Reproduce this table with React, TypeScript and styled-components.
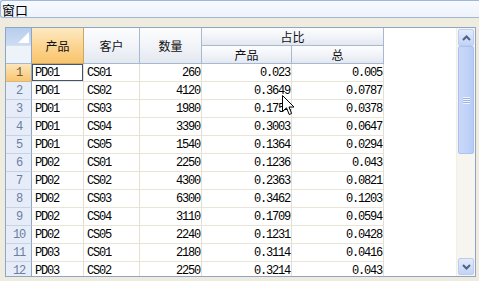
import React from "react";
import styled, { createGlobalStyle, css } from "styled-components";

const Global = createGlobalStyle`
  html, body { margin: 0; padding: 0; }
  body {
    width: 479px;
    height: 281px;
    overflow: hidden;
    background: #efebdf;
    font-family: "Noto Sans CJK SC", "Liberation Sans", sans-serif;
  }
`;

const Page = styled.div`
  position: relative;
  display: flex;
  flex-direction: column;
  width: 479px;
  height: 281px;
`;

const TitleBar = styled.div`
  box-sizing: border-box;
  height: 18px;
  display: flex;
  align-items: center;
  padding-left: 1px;
  background: linear-gradient(#f6f9fe, #eef3fb);
  border: 1px solid #9fb8d9;
  border-radius: 3px 0 0 3px;
  border-right: none;
  font-size: 13px;
  color: #000;
  line-height: 1;
`;

const Content = styled.div`
  flex: 1;
  padding: 9px 3px 4px 5px;
  display: flex;
`;

const Frame = styled.div`
  box-sizing: border-box;
  flex: 1;
  height: 250px;
  display: flex;
  border: 1px solid #8ea6c4;
  background: #ffffff;
  overflow: hidden;
`;

const Table = styled.div`
  display: grid;
  grid-template-columns: 26px 52px 56px 62px 90px 92px;
  grid-template-rows: 18px 18px;
  grid-auto-rows: 18px;
  align-self: flex-start;
`;

const headerBase = css`
  box-sizing: border-box;
  display: flex;
  align-items: center;
  justify-content: center;
  border-right: 1px solid #a7b9d1;
  border-bottom: 1px solid #a7b9d1;
  background: linear-gradient(#fdfdfe 0%, #f3f5f9 45%, #e3e8f0 100%);
  font-size: 12px;
  color: #111;
  line-height: 1;
`;

const HeaderCell = styled.div<{ $active?: boolean; $rows?: number; $cols?: number }>`
  ${headerBase};
  grid-row: span ${(p) => p.$rows ?? 1};
  grid-column: span ${(p) => p.$cols ?? 1};
  ${(p) =>
    p.$active &&
    css`
      background: linear-gradient(#fde9c3 0%, #fcd592 50%, #f9c46c 100%);
      border-right-color: #c9a66a;
      border-bottom-color: #c9a66a;
    `}
`;

const Corner = styled.div`
  box-sizing: border-box;
  grid-row: span 2;
  display: flex;
  flex-direction: column;
  border-right: 1px solid #8ea6c4;
  border-bottom: 1px solid #a7b9d1;
  background: #eef2f9;
`;

const CornerTop = styled.div`
  position: relative;
  height: 17px;
  background: linear-gradient(#b7cdee, #cddcf3);
  border-bottom: 1px solid #d4dff0;
  &::after {
    content: "";
    position: absolute;
    right: 2px;
    bottom: 2px;
    width: 0;
    height: 0;
    border-left: 11px solid transparent;
    border-bottom: 11px solid #ffffff;
  }
`;

const RowHead = styled.div<{ $active?: boolean }>`
  box-sizing: border-box;
  display: flex;
  align-items: center;
  justify-content: center;
  border-right: 1px solid #8ea6c4;
  border-bottom: 1px solid #c5d3e6;
  background: #e6edf8;
  color: #6a7ea2;
  font-family: "Liberation Mono", monospace;
  font-size: 12px;
  letter-spacing: -1.2px;
  padding-left: 1px;
  ${(p) =>
    p.$active &&
    css`
      background: linear-gradient(#fde6bb, #f9c670);
      color: #6b5a3a;
      border-bottom-color: #d8b77a;
    `}
`;

const Cell = styled.div<{ $num?: boolean; $active?: boolean }>`
  box-sizing: border-box;
  display: flex;
  align-items: center;
  justify-content: ${(p) => (p.$num ? "flex-end" : "flex-start")};
  padding: ${(p) => (p.$num ? "0 1px 0 0" : "0 0 0 3px")};
  border-right: 1px solid #e4dfcf;
  border-bottom: 1px solid #e8e4d6;
  font-family: "Liberation Mono", monospace;
  font-size: 12px;
  letter-spacing: -1.2px;
  color: #000;
  white-space: nowrap;
  ${(p) =>
    p.$active &&
    css`
      box-shadow: inset 0 0 0 1px #3f5478;
    `}
`;

const Filler = styled.div`
  flex: 1;
  background: #ffffff;
`;

const ScrollBar = styled.div`
  box-sizing: border-box;
  width: 19px;
  display: flex;
  flex-direction: column;
  padding: 1px;
  background: #f6f5ef;
  border-left: 1px solid #f0efe8;
`;

const ScrollButton = styled.div`
  box-sizing: border-box;
  height: 17px;
  display: flex;
  align-items: center;
  justify-content: center;
  border: 1px solid #bccdf0;
  border-radius: 2px;
  background: linear-gradient(#e3ebfc, #c2d3f7);
`;

const Track = styled.div`
  flex: 1;
  display: flex;
  flex-direction: column;
`;

const Thumb = styled.div`
  box-sizing: border-box;
  height: 108px;
  display: flex;
  align-items: center;
  justify-content: center;
  border: 1px solid #adc1ef;
  border-radius: 2px;
  background: linear-gradient(90deg, #cad9fa, #c0d2f8 60%, #b7cbf4);
`;

const Grip = styled.div`
  width: 7px;
  height: 7px;
  background: repeating-linear-gradient(#eef3fe 0 1px, #9fb4e4 1px 2px);
`;

const Cursor = styled.svg`
  position: absolute;
  left: 282px;
  top: 95px;
  pointer-events: none;
`;

const Chevron = ({ up }: { up?: boolean }) => (
  <svg width="9" height="6" viewBox="0 0 9 6">
    <path
      d={up ? "M1 5 L4.5 1.5 L8 5" : "M1 1 L4.5 4.5 L8 1"}
      fill="none"
      stroke="#4d6185"
      strokeWidth="2"
    />
  </svg>
);

type Row = [string, string, string, string, string];

const rows: Row[] = [
  ["PD01", "CS01", "260", "0.023", "0.005"],
  ["PD01", "CS02", "4120", "0.3649", "0.0787"],
  ["PD01", "CS03", "1980", "0.1754", "0.0378"],
  ["PD01", "CS04", "3390", "0.3003", "0.0647"],
  ["PD01", "CS05", "1540", "0.1364", "0.0294"],
  ["PD02", "CS01", "2250", "0.1236", "0.043"],
  ["PD02", "CS02", "4300", "0.2363", "0.0821"],
  ["PD02", "CS03", "6300", "0.3462", "0.1203"],
  ["PD02", "CS04", "3110", "0.1709", "0.0594"],
  ["PD02", "CS05", "2240", "0.1231", "0.0428"],
  ["PD03", "CS01", "2180", "0.3114", "0.0416"],
  ["PD03", "CS02", "2250", "0.3214", "0.043"],
];

export default function App() {
  return (
    <Page>
      <Global />
      <TitleBar>窗口</TitleBar>
      <Content>
        <Frame>
          <Table>
            <Corner>
              <CornerTop />
            </Corner>
            <HeaderCell $rows={2} $active>
              产品
            </HeaderCell>
            <HeaderCell $rows={2}>客户</HeaderCell>
            <HeaderCell $rows={2}>数量</HeaderCell>
            <HeaderCell $cols={2}>占比</HeaderCell>
            <HeaderCell>产品</HeaderCell>
            <HeaderCell>总</HeaderCell>
            {rows.map((r, i) => (
              <React.Fragment key={i}>
                <RowHead $active={i === 0}>{i + 1}</RowHead>
                <Cell $active={i === 0}>{r[0]}</Cell>
                <Cell>{r[1]}</Cell>
                <Cell $num>{r[2]}</Cell>
                <Cell $num>{r[3]}</Cell>
                <Cell $num>{r[4]}</Cell>
              </React.Fragment>
            ))}
          </Table>
          <Filler />
          <ScrollBar>
            <ScrollButton>
              <Chevron up />
            </ScrollButton>
            <Track>
              <Thumb>
                <Grip />
              </Thumb>
            </Track>
            <ScrollButton>
              <Chevron />
            </ScrollButton>
          </ScrollBar>
        </Frame>
      </Content>
      <Cursor width="13" height="21" viewBox="0 0 13 21">
        <path
          d="M0.5 0.5 L0.5 16.5 L4.5 12.8 L7.2 19.5 L9.6 18.5 L7 12 L12 12 Z"
          fill="#ffffff"
          stroke="#000000"
          strokeWidth="1"
          strokeLinejoin="miter"
        />
      </Cursor>
    </Page>
  );
}
